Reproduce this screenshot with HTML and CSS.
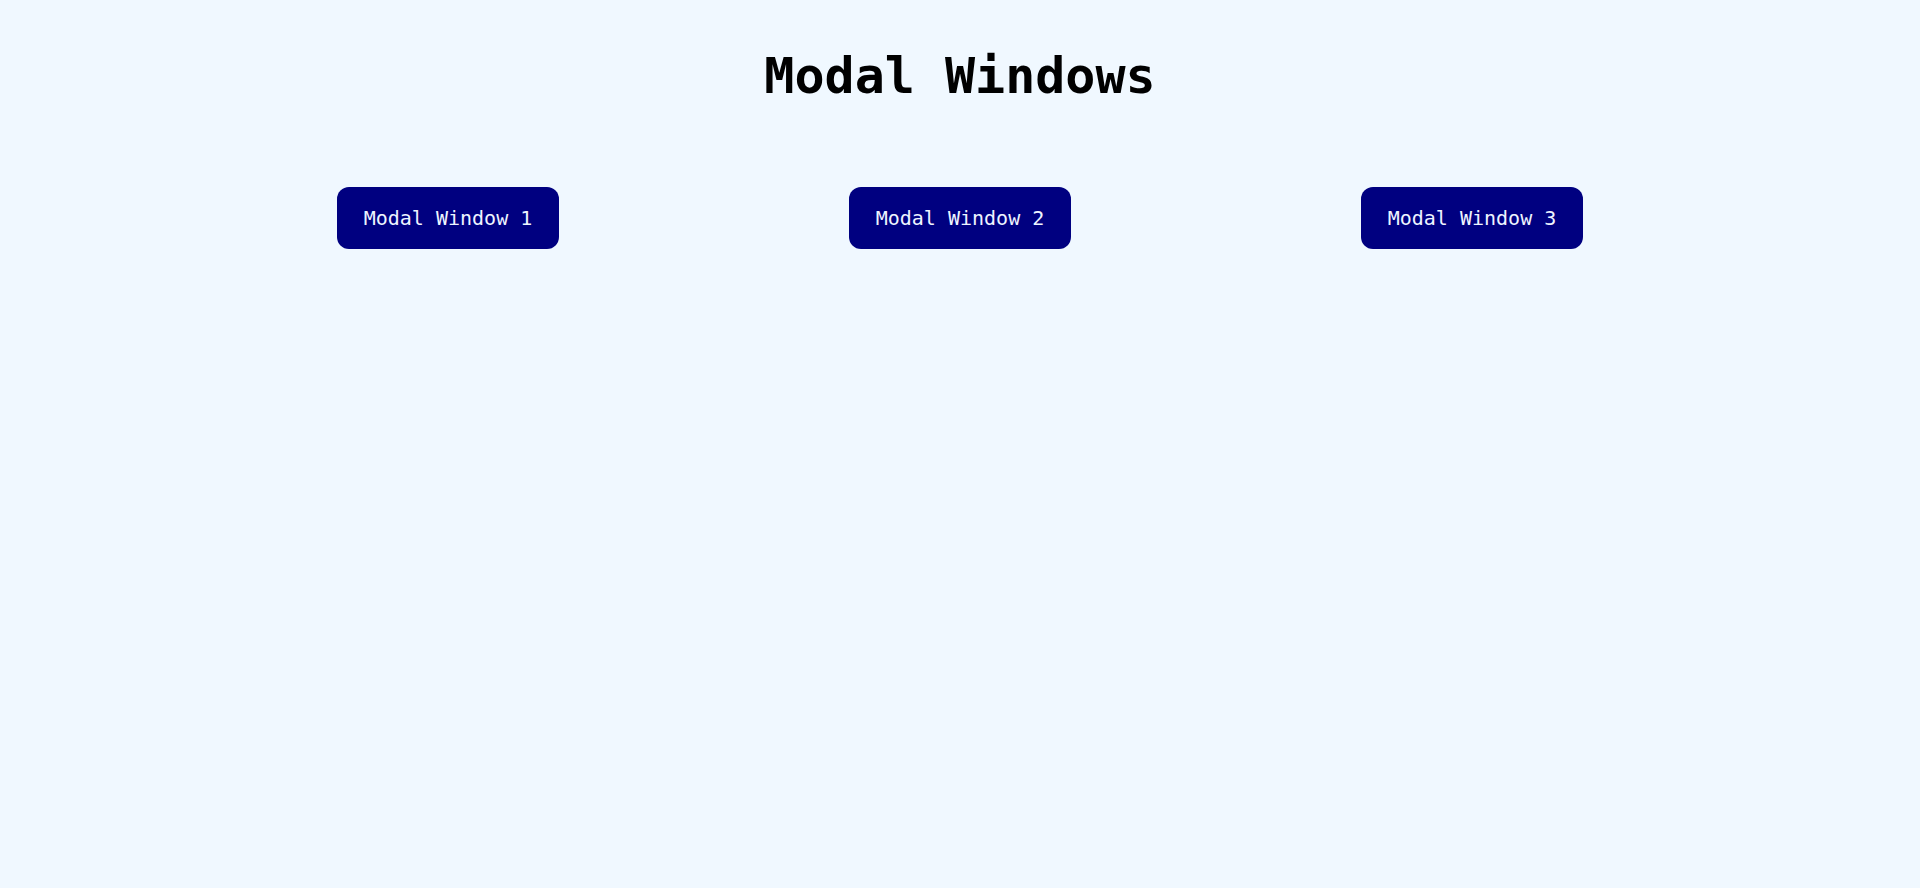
FILE: index.html
```html
<!DOCTYPE html>
<html lang="en">
<head>
<meta charset="utf-8">
<title>Modal Windows</title>
<link rel="stylesheet" href="styles.css">
</head>
<body>
<h1 class="title">Modal Windows</h1>
<div class="buttons">
  <div class="cell"><button class="open-btn">Modal Window 1</button></div>
  <div class="cell"><button class="open-btn">Modal Window 2</button></div>
  <div class="cell"><button class="open-btn">Modal Window 3</button></div>
</div>
</body>
</html>
```
FILE: styles.css
```css
html, body {
  margin: 0;
  padding: 0;
  background: #f0f8ff;
  min-height: 100%;
}
body {
  font-family: "DejaVu Sans Mono", "Liberation Mono", monospace;
  color: #000;
}
.title {
  margin: 0;
  padding-top: 50px;
  text-align: center;
  font-size: 50px;
  line-height: 52px;
  font-weight: 700;
}
.buttons {
  width: 1536px;
  margin: 85px auto 0;
  display: grid;
  grid-template-columns: repeat(3, 1fr);
}
.cell {
  display: flex;
  justify-content: center;
}
.open-btn {
  font-family: "DejaVu Sans Mono", "Liberation Mono", monospace;
  font-size: 20px;
  line-height: 23px;
  width: 222px;
  height: 62px;
  padding: 0;
  border: none;
  border-radius: 12px;
  background: #000080;
  color: #eef4ff;
  cursor: pointer;
}
```
